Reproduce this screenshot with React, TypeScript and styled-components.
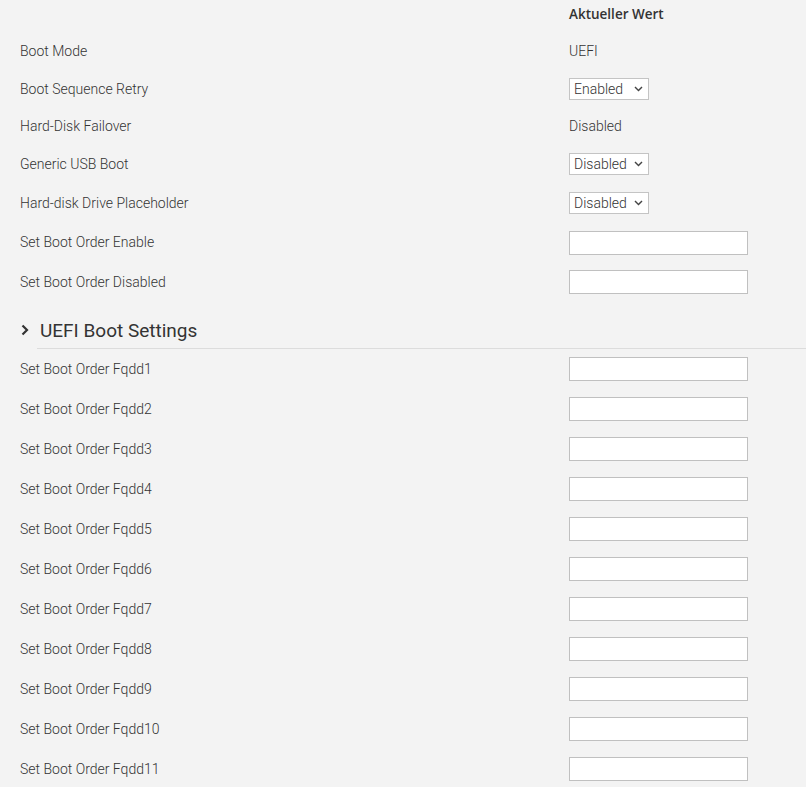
import React from "react";
import styled, { createGlobalStyle } from "styled-components";

const GlobalStyle = createGlobalStyle`
  html, body {
    margin: 0;
    padding: 0;
    background: #f3f3f3;
  }
  body {
    font-family: Roboto, "Liberation Sans", Arial, sans-serif;
    font-size: 14px;
    font-weight: 300;
    color: #333;
  }
`;

const Page = styled.div`
  width: 806px;
  display: flex;
  flex-direction: column;
`;

const Row = styled.div<{ $h: number }>`
  display: grid;
  grid-template-columns: 549px 1fr;
  align-items: center;
  height: ${(p) => p.$h}px;
  padding-left: 20px;
  line-height: 21px;
`;

const HeaderRow = styled.div`
  display: grid;
  grid-template-columns: 549px 1fr;
  padding: 4px 0 8px 20px;
  line-height: 21px;
`;

const HeaderCell = styled.div`
  font-family: "Open Sans", Roboto, sans-serif;
  font-weight: 600;
  font-size: 13.5px;
  color: #333;
`;

const Label = styled.div`
  color: #333;
`;

const Value = styled.div`
  color: #333;
`;

const SelectBox = styled.div`
  display: inline-flex;
  align-items: center;
  justify-content: space-between;
  box-sizing: border-box;
  width: 80px;
  height: 22px;
  padding: 0 5px 0 4px;
  background: #fff;
  border: 1px solid #c4c4c4;
  color: #333;
  font-size: 14px;
`;

const Chevron = styled.svg`
  width: 9px;
  height: 6px;
`;

const TextInput = styled.div`
  box-sizing: border-box;
  width: 179px;
  height: 24px;
  background: #fff;
  border: 1px solid #c0c0c0;
`;

const SectionHeading = styled.div`
  display: flex;
  align-items: center;
  margin: 16px 0 0 37px;
  height: 24px;
  padding-bottom: 6px;
  font-size: 19px;
  font-weight: 400;
  color: #333;
  border-bottom: 1px solid #dcdcdc;
`;

const HeadingIcon = styled.svg`
  width: 8px;
  height: 12px;
  margin-left: -16px;
`;

const HeadingText = styled.span`
  margin-left: 11px;
`;

type Kind =
  | { type: "text"; value: string }
  | { type: "select"; value: string }
  | { type: "input" };

const topRows: { label: string; kind: Kind; h: number }[] = [
  { label: "Boot Mode", kind: { type: "text", value: "UEFI" }, h: 37 },
  { label: "Boot Sequence Retry", kind: { type: "select", value: "Enabled" }, h: 38 },
  { label: "Hard-Disk Failover", kind: { type: "text", value: "Disabled" }, h: 37 },
  { label: "Generic USB Boot", kind: { type: "select", value: "Disabled" }, h: 38 },
  { label: "Hard-disk Drive Placeholder", kind: { type: "select", value: "Disabled" }, h: 40 },
  { label: "Set Boot Order Enable", kind: { type: "input" }, h: 39 },
  { label: "Set Boot Order Disabled", kind: { type: "input" }, h: 40 },
];

const Cell: React.FC<{ kind: Kind }> = ({ kind }) => {
  if (kind.type === "text") return <Value>{kind.value}</Value>;
  if (kind.type === "select")
    return (
      <div>
        <SelectBox>
          <span>{kind.value}</span>
          <Chevron viewBox="0 0 9 6">
            <path d="M1 1 L4.5 4.6 L8 1" fill="none" stroke="#444" strokeWidth="1.4" />
          </Chevron>
        </SelectBox>
      </div>
    );
  return (
    <div>
      <TextInput />
    </div>
  );
};

export default function App() {
  const fqdd = Array.from({ length: 11 }, (_, i) => `Set Boot Order Fqdd${i + 1}`);
  return (
    <Page>
      <GlobalStyle />
      <HeaderRow>
        <div />
        <HeaderCell>Aktueller Wert</HeaderCell>
      </HeaderRow>
      {topRows.map((r) => (
        <Row key={r.label} $h={r.h}>
          <Label>{r.label}</Label>
          <Cell kind={r.kind} />
        </Row>
      ))}
      <SectionHeading>
        <HeadingIcon viewBox="0 0 8 12">
          <path d="M1.5 1.5 L6 6 L1.5 10.5" fill="none" stroke="#333" strokeWidth="2.2" />
        </HeadingIcon>
        <HeadingText>UEFI Boot Settings</HeadingText>
      </SectionHeading>
      {fqdd.map((l) => (
        <Row key={l} $h={40}>
          <Label>{l}</Label>
          <Cell kind={{ type: "input" }} />
        </Row>
      ))}
    </Page>
  );
}
